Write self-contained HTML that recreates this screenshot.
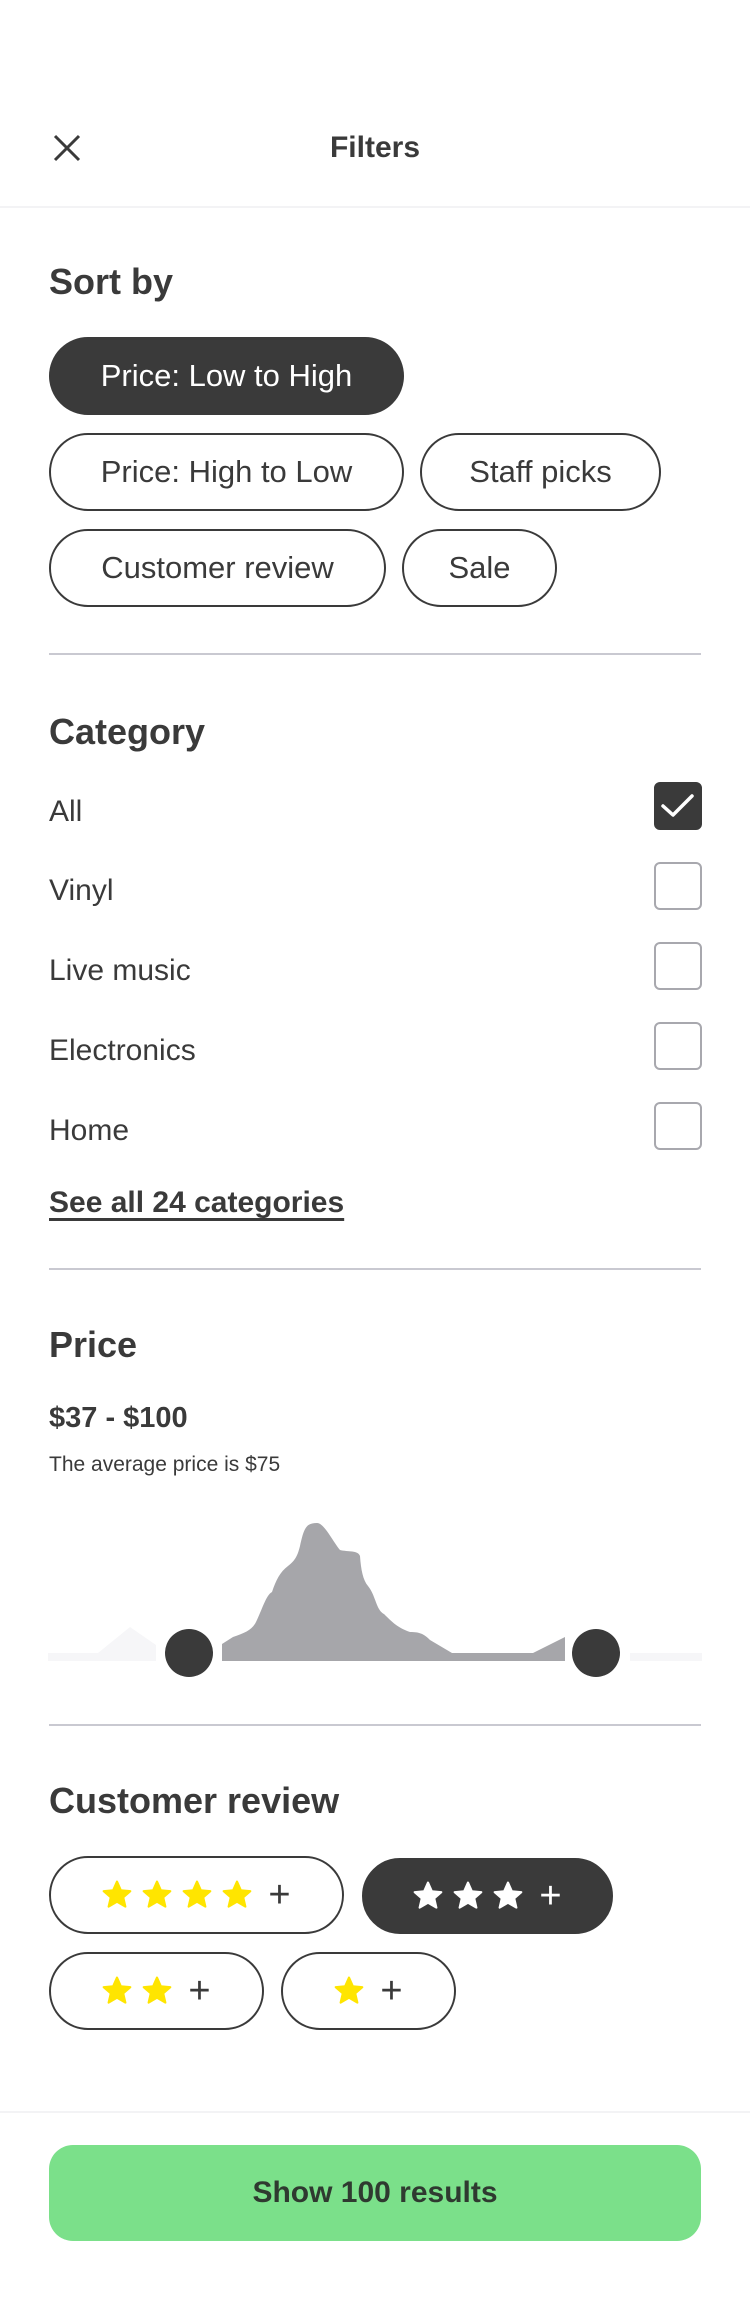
<!DOCTYPE html>
<html><head><meta charset="utf-8"><style>
*{margin:0;padding:0;box-sizing:border-box}
body{width:750px;height:2318px;background:#fff;font-family:"Liberation Sans",sans-serif;color:#3a3a3a;position:relative;overflow:hidden}
.a{position:absolute}
.t{position:absolute;white-space:nowrap;line-height:1}
.pill{position:absolute;border:2px solid #3a3a3a;border-radius:40px;display:flex;align-items:center;justify-content:center;font-size:31px;color:#3a3a3a;background:#fff}
.pill.on{background:#3a3a3a;color:#fff}
.hr{position:absolute;left:49px;width:652px;height:2px;background:#c9c9d1}
.h2{font-size:36px;font-weight:bold;left:49px}
.lbl{font-size:30px;left:49px}
.cb{position:absolute;left:654px;width:48px;height:48px;border:2px solid #a8a8ae;border-radius:6px}
.star{width:30px;height:30px;margin-right:10px}
.plus{font-size:38px;margin-left:6px;line-height:1}
</style></head><body>
<svg class="a" style="left:53px;top:134px" width="28" height="28" viewBox="0 0 28 28"><path d="M2 2L26 26M26 2L2 26" stroke="#3a3a3a" stroke-width="3"/></svg>
<div class="t" style="left:0;width:750px;text-align:center;top:133px;font-size:30px;font-weight:bold">Filters</div>
<div class="a" style="left:0;top:206px;width:750px;height:2px;background:#f3f3f5"></div>

<div class="t h2" style="top:264px">Sort by</div>
<div class="pill on" style="left:49px;top:337px;width:355px;height:78px">Price: Low to High</div>
<div class="pill" style="left:49px;top:433px;width:355px;height:78px">Price: High to Low</div>
<div class="pill" style="left:420px;top:433px;width:241px;height:78px">Staff picks</div>
<div class="pill" style="left:49px;top:529px;width:337px;height:78px">Customer review</div>
<div class="pill" style="left:402px;top:529px;width:155px;height:78px">Sale</div>
<div class="hr" style="top:653px"></div>

<div class="t h2" style="top:714px">Category</div>
<div class="t lbl" style="top:797px">All</div>
<div class="t lbl" style="top:876px">Vinyl</div>
<div class="t lbl" style="top:956px">Live music</div>
<div class="t lbl" style="top:1036px">Electronics</div>
<div class="t lbl" style="top:1116px">Home</div>
<div class="cb" style="top:782px;background:#3a3a3a;border-color:#3a3a3a"><svg width="44" height="44" viewBox="0 0 44 44"><path d="M7 22L17 31L36 12" stroke="#fff" stroke-width="3.5" fill="none" stroke-linecap="round" stroke-linejoin="round"/></svg></div>
<div class="cb" style="top:862px"></div>
<div class="cb" style="top:942px"></div>
<div class="cb" style="top:1022px"></div>
<div class="cb" style="top:1102px"></div>
<div class="t" style="left:49px;top:1188px;font-size:30px;font-weight:bold;text-decoration:underline;text-underline-offset:6px">See all 24 categories</div>
<div class="hr" style="top:1268px"></div>

<div class="t h2" style="top:1327px">Price</div>
<div class="t" style="left:49px;top:1404px;font-size:29px;font-weight:bold">$37 - $100</div>
<div class="t" style="left:49px;top:1454px;font-size:21px">The average price is $75</div>
<svg class="a" style="left:0;top:1500px" width="750" height="200" viewBox="0 1500 750 200">
<path d="M48 1653H98L130 1627L156 1645V1661H48Z" fill="#f6f6f8"/>
<rect x="630" y="1653" width="72" height="8" fill="#f6f6f8"/>
<path d="M222 1644L233 1637C245 1633 252 1630 256 1622C262 1610 266 1595 272 1592C276 1580 280 1572 288 1566C296 1560 298 1554 300 1546C304 1528 306 1523 317 1523C324 1523 332 1540 340 1550C348 1552 358 1550 360 1556C361 1570 363 1580 368 1586C376 1596 376 1610 384 1614C392 1622 398 1628 410 1632C420 1632 424 1634 430 1640L452 1653H533L565 1637V1661H222Z" fill="#a6a6aa"/>
<circle cx="189" cy="1653" r="27" fill="#fff"/><circle cx="189" cy="1653" r="24" fill="#3a3a3a"/>
<circle cx="596" cy="1653" r="27" fill="#fff"/><circle cx="596" cy="1653" r="24" fill="#3a3a3a"/>
</svg>
<div class="hr" style="top:1724px"></div>

<div class="t h2" style="top:1783px">Customer review</div>
<svg width="0" height="0" style="position:absolute"><defs><path id="s" d="M14 1.5L17.6 9.6L26.4 10.4L19.8 16.2L21.8 24.8L14 20.3L6.2 24.8L8.2 16.2L1.6 10.4L10.4 9.6Z" stroke-linejoin="round" stroke-width="2"/></defs></svg>
<div class="pill" style="left:49px;top:1856px;width:295px;height:78px">
<svg class="star" viewBox="0 0 28 28"><use href="#s" fill="#ffe500" stroke="#ffe500"/></svg><svg class="star" viewBox="0 0 28 28"><use href="#s" fill="#ffe500" stroke="#ffe500"/></svg><svg class="star" viewBox="0 0 28 28"><use href="#s" fill="#ffe500" stroke="#ffe500"/></svg><svg class="star" viewBox="0 0 28 28"><use href="#s" fill="#ffe500" stroke="#ffe500"/></svg><span class="plus">+</span></div>
<div class="pill on" style="left:362px;top:1858px;width:251px;height:76px">
<svg class="star" viewBox="0 0 28 28"><use href="#s" fill="#fff" stroke="#fff"/></svg><svg class="star" viewBox="0 0 28 28"><use href="#s" fill="#fff" stroke="#fff"/></svg><svg class="star" viewBox="0 0 28 28"><use href="#s" fill="#fff" stroke="#fff"/></svg><span class="plus">+</span></div>
<div class="pill" style="left:49px;top:1952px;width:215px;height:78px">
<svg class="star" viewBox="0 0 28 28"><use href="#s" fill="#ffe500" stroke="#ffe500"/></svg><svg class="star" viewBox="0 0 28 28"><use href="#s" fill="#ffe500" stroke="#ffe500"/></svg><span class="plus">+</span></div>
<div class="pill" style="left:281px;top:1952px;width:175px;height:78px">
<svg class="star" viewBox="0 0 28 28"><use href="#s" fill="#ffe500" stroke="#ffe500"/></svg><span class="plus">+</span></div>

<div class="a" style="left:0;top:2111px;width:750px;height:2px;background:#f3f3f5"></div>
<div class="a" style="left:49px;top:2145px;width:652px;height:96px;border-radius:24px;background:#7be08a;display:flex;align-items:center;justify-content:center;font-size:30px;font-weight:bold;color:#2f3a30">Show 100 results</div>
</body></html>
